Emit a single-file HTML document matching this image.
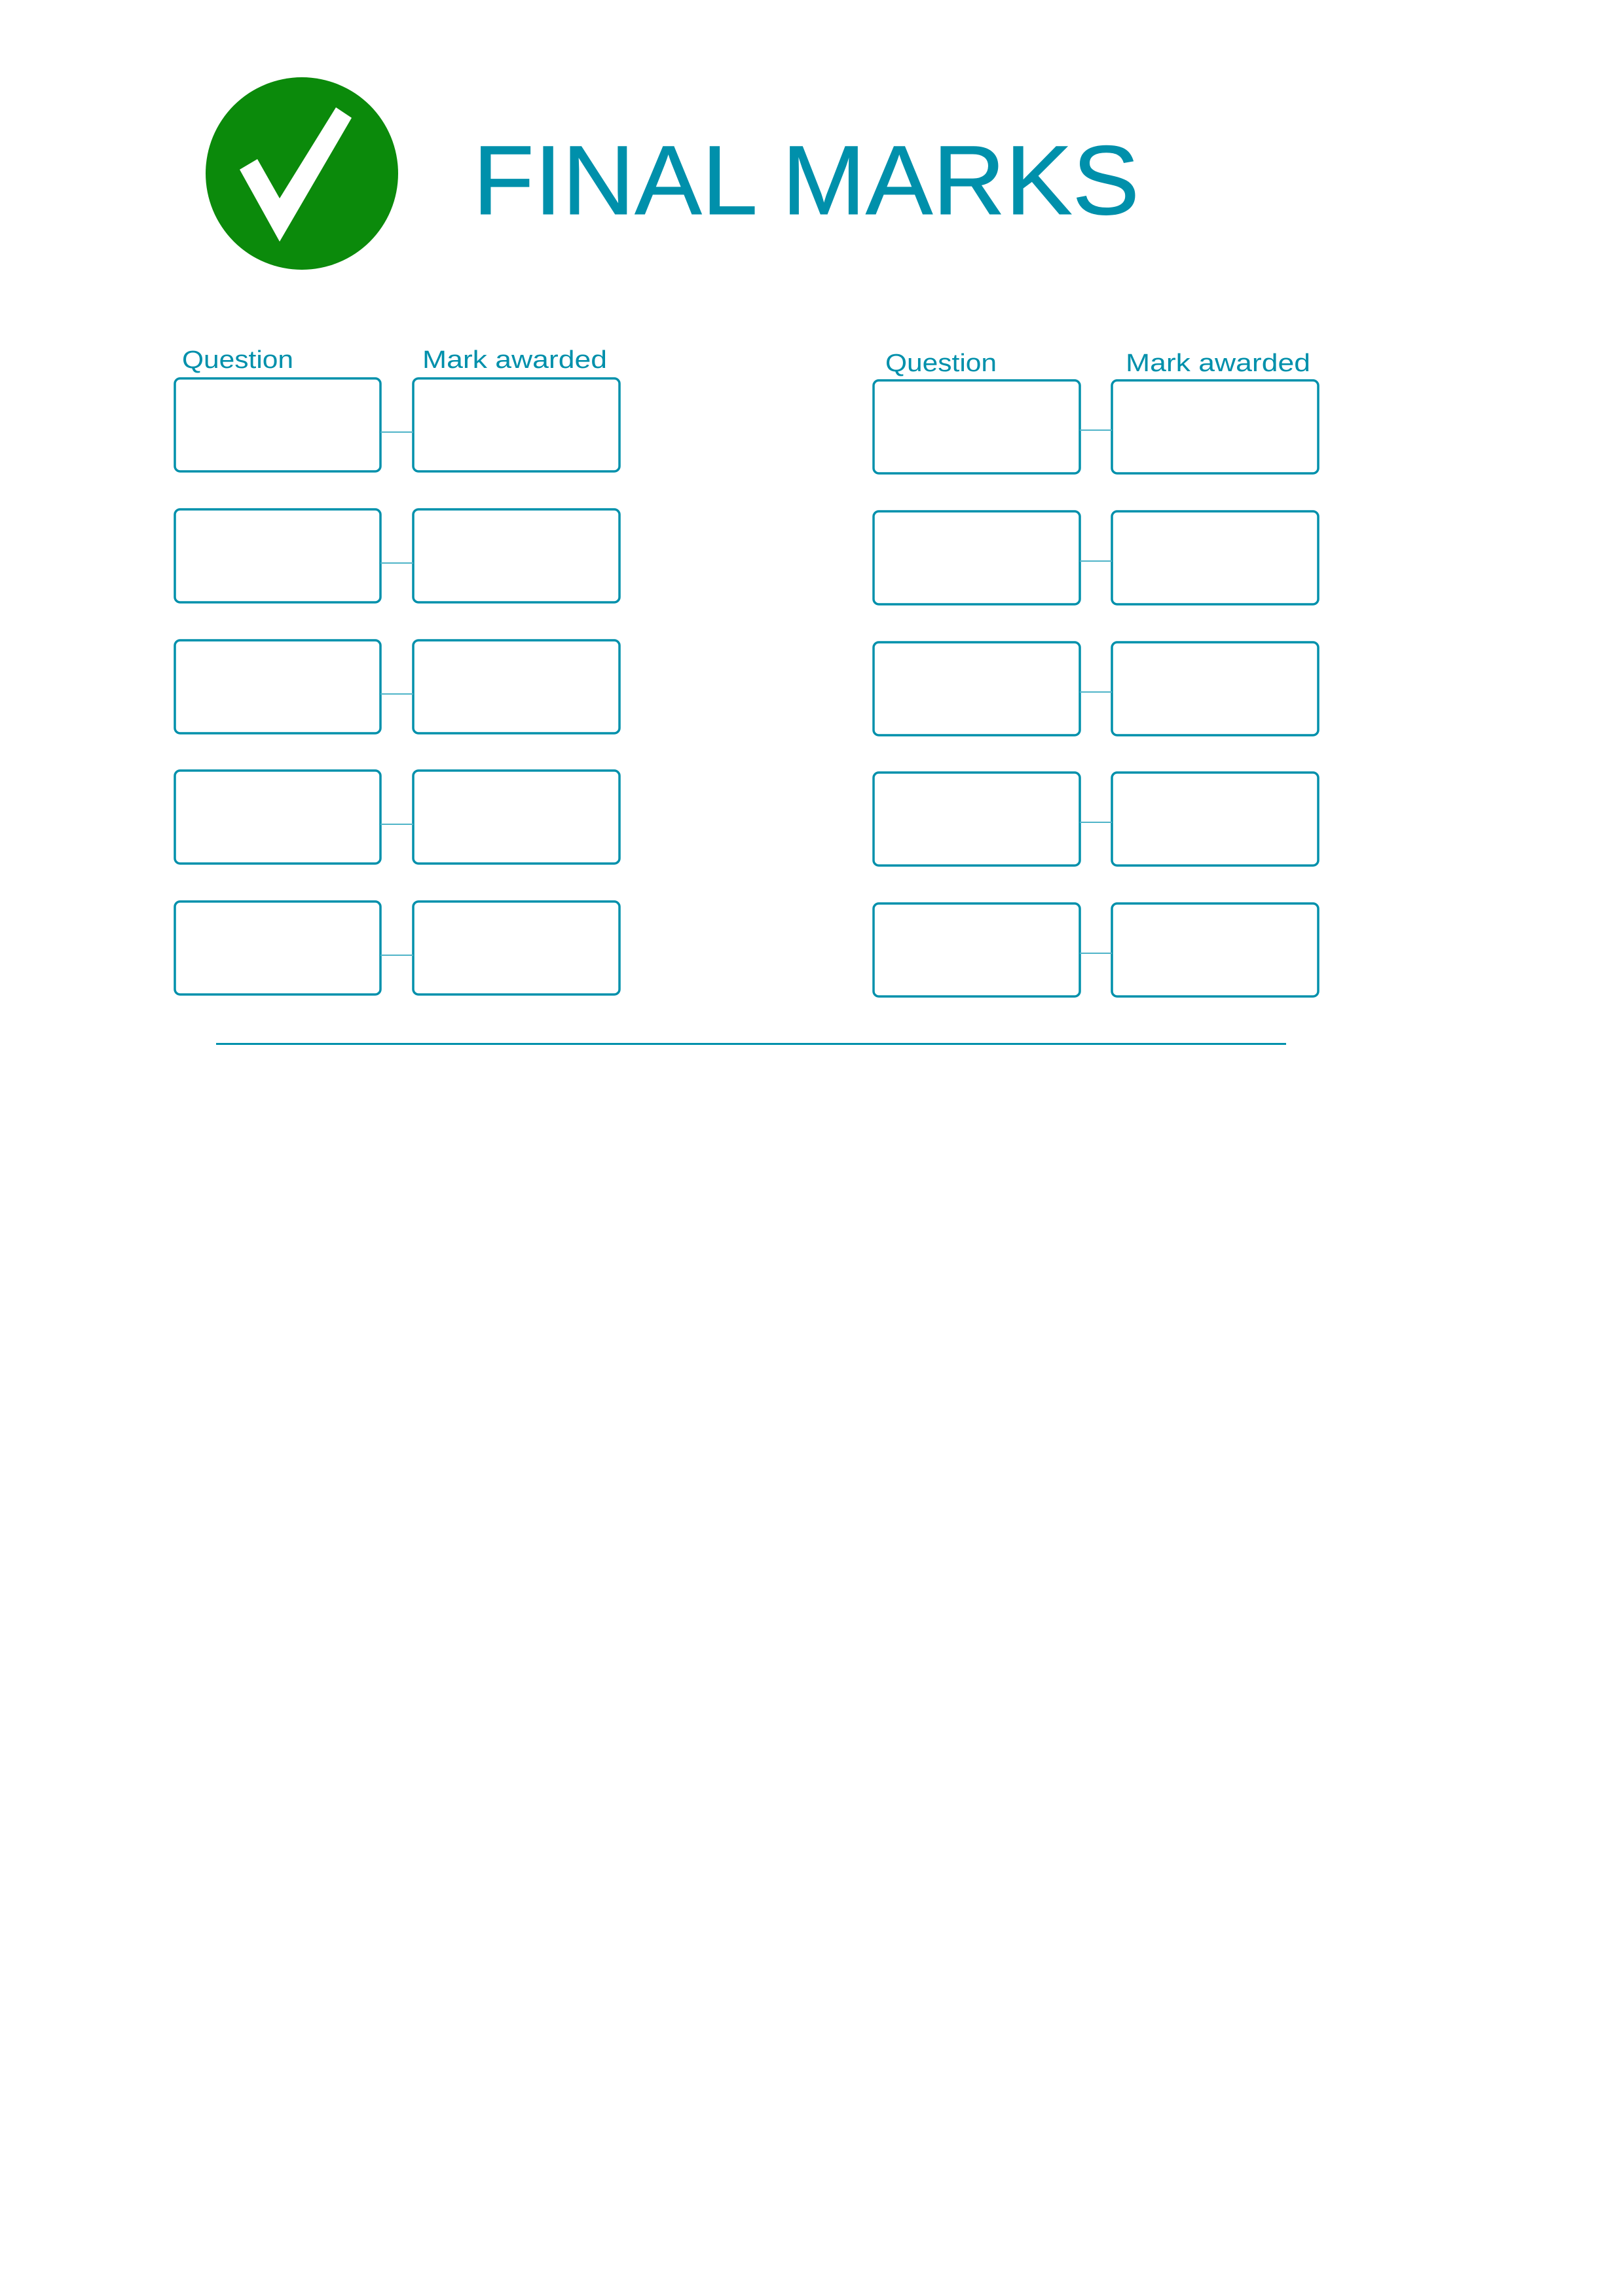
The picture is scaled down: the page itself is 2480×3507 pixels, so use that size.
<!DOCTYPE html>
<html><head><meta charset="utf-8"><style>
html,body{margin:0;padding:0;background:#fff;}
svg{display:block;}
</style></head><body>
<svg width="2480" height="3507" viewBox="0 0 2480 3507" xmlns="http://www.w3.org/2000/svg">
<rect width="2480" height="3507" fill="#fff"/>
<circle cx="461" cy="265" r="147" fill="#0b8a0b"/>
<polygon points="366,259 393,243 427,303 513,164 537,180 427,369" fill="#fff"/>
<text x="722" y="327" font-family="Liberation Sans, sans-serif" font-size="150" fill="#0090ab" stroke="#0090ab" stroke-width="1" textLength="1018" lengthAdjust="spacingAndGlyphs">FINAL MARKS</text>
<g font-family="Liberation Sans, sans-serif" font-size="38" fill="#0090ab">
<text x="278" y="562" textLength="170" lengthAdjust="spacingAndGlyphs">Question</text>
<text x="645" y="562" textLength="282" lengthAdjust="spacingAndGlyphs">Mark awarded</text>
<text x="1352" y="567" textLength="170" lengthAdjust="spacingAndGlyphs">Question</text>
<text x="1719" y="567" textLength="282" lengthAdjust="spacingAndGlyphs">Mark awarded</text>
</g>
<g fill="none" stroke="#0090ab" stroke-width="3.5">
<g id="L">
<rect x="267" y="578" width="314" height="142" rx="8"/>
<rect x="631" y="578" width="315" height="142" rx="8"/>
<line x1="581" y1="660" x2="631" y2="660" stroke="#4fb4c8" stroke-width="2"/>
</g>
<use href="#L" y="200"/><use href="#L" y="400"/><use href="#L" y="599"/><use href="#L" y="799"/>
<g id="R">
<rect x="1334" y="581" width="315" height="142" rx="8"/>
<rect x="1698" y="581" width="315" height="142" rx="8"/>
<line x1="1649" y1="657" x2="1698" y2="657" stroke="#4fb4c8" stroke-width="2"/>
</g>
<use href="#R" y="200"/><use href="#R" y="400"/><use href="#R" y="599"/><use href="#R" y="799"/>
</g>
<rect x="330" y="1593" width="1634" height="3" fill="#0090ab"/>
</svg>
</body></html>
